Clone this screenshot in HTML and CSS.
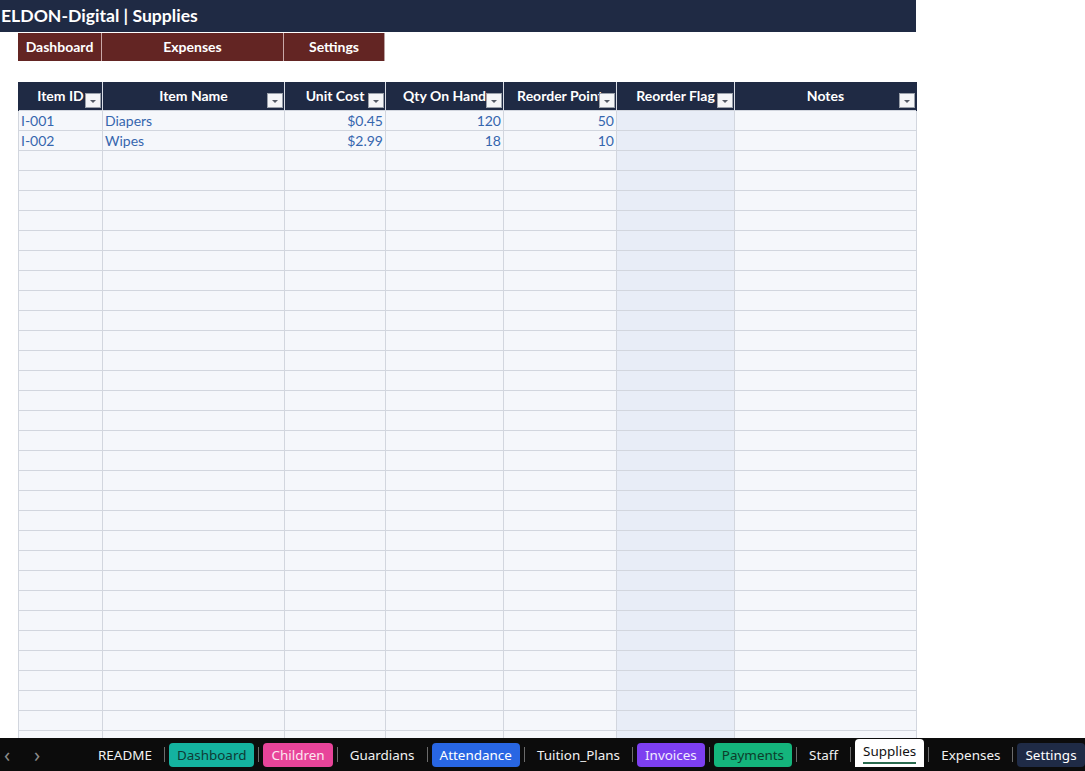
FILE: index.html
```html
<!DOCTYPE html>
<html>
<head>
<meta charset="utf-8">
<link rel="stylesheet" href="styles.css">
</head>
<body>
<div class="app">
  <div class="sheet">
    <div class="titlebar">ELDON-Digital | Supplies</div>
    <div class="navrow">
      <div class="navbtn w1">Dashboard</div>
      <div class="navbtn w2">Expenses</div>
      <div class="navbtn w3">Settings</div>
    </div>
    <table class="grid">
      <colgroup>
        <col class="c1"><col class="c2"><col class="c3"><col class="c4"><col class="c5"><col class="c6"><col class="c7">
      </colgroup>
      <thead>
        <tr>
          <th><span class="hl">Item ID</span><span class="fb"></span></th>
          <th><span class="hl">Item Name</span><span class="fb"></span></th>
          <th><span class="hl">Unit Cost</span><span class="fb"></span></th>
          <th><span class="hl">Qty On Hand</span><span class="fb"></span></th>
          <th><span class="hl">Reorder Point</span><span class="fb"></span></th>
          <th><span class="hl">Reorder Flag</span><span class="fb"></span></th>
          <th><span class="hl">Notes</span><span class="fb"></span></th>
        </tr>
      </thead>
      <tbody>
        <tr><td>I-001</td><td>Diapers</td><td class="r">$0.45</td><td class="r">120</td><td class="r">50</td><td class="flag"></td><td></td></tr>
        <tr><td>I-002</td><td>Wipes</td><td class="r">$2.99</td><td class="r">18</td><td class="r">10</td><td class="flag"></td><td></td></tr>
        <tr><td></td><td></td><td></td><td></td><td></td><td class="flag"></td><td></td></tr>
        <tr><td></td><td></td><td></td><td></td><td></td><td class="flag"></td><td></td></tr>
        <tr><td></td><td></td><td></td><td></td><td></td><td class="flag"></td><td></td></tr>
        <tr><td></td><td></td><td></td><td></td><td></td><td class="flag"></td><td></td></tr>
        <tr><td></td><td></td><td></td><td></td><td></td><td class="flag"></td><td></td></tr>
        <tr><td></td><td></td><td></td><td></td><td></td><td class="flag"></td><td></td></tr>
        <tr><td></td><td></td><td></td><td></td><td></td><td class="flag"></td><td></td></tr>
        <tr><td></td><td></td><td></td><td></td><td></td><td class="flag"></td><td></td></tr>
        <tr><td></td><td></td><td></td><td></td><td></td><td class="flag"></td><td></td></tr>
        <tr><td></td><td></td><td></td><td></td><td></td><td class="flag"></td><td></td></tr>
        <tr><td></td><td></td><td></td><td></td><td></td><td class="flag"></td><td></td></tr>
        <tr><td></td><td></td><td></td><td></td><td></td><td class="flag"></td><td></td></tr>
        <tr><td></td><td></td><td></td><td></td><td></td><td class="flag"></td><td></td></tr>
        <tr><td></td><td></td><td></td><td></td><td></td><td class="flag"></td><td></td></tr>
        <tr><td></td><td></td><td></td><td></td><td></td><td class="flag"></td><td></td></tr>
        <tr><td></td><td></td><td></td><td></td><td></td><td class="flag"></td><td></td></tr>
        <tr><td></td><td></td><td></td><td></td><td></td><td class="flag"></td><td></td></tr>
        <tr><td></td><td></td><td></td><td></td><td></td><td class="flag"></td><td></td></tr>
        <tr><td></td><td></td><td></td><td></td><td></td><td class="flag"></td><td></td></tr>
        <tr><td></td><td></td><td></td><td></td><td></td><td class="flag"></td><td></td></tr>
        <tr><td></td><td></td><td></td><td></td><td></td><td class="flag"></td><td></td></tr>
        <tr><td></td><td></td><td></td><td></td><td></td><td class="flag"></td><td></td></tr>
        <tr><td></td><td></td><td></td><td></td><td></td><td class="flag"></td><td></td></tr>
        <tr><td></td><td></td><td></td><td></td><td></td><td class="flag"></td><td></td></tr>
        <tr><td></td><td></td><td></td><td></td><td></td><td class="flag"></td><td></td></tr>
        <tr><td></td><td></td><td></td><td></td><td></td><td class="flag"></td><td></td></tr>
        <tr><td></td><td></td><td></td><td></td><td></td><td class="flag"></td><td></td></tr>
        <tr><td></td><td></td><td></td><td></td><td></td><td class="flag"></td><td></td></tr>
        <tr><td></td><td></td><td></td><td></td><td></td><td class="flag"></td><td></td></tr>
        <tr><td></td><td></td><td></td><td></td><td></td><td class="flag"></td><td></td></tr>
        <tr><td></td><td></td><td></td><td></td><td></td><td class="flag"></td><td></td></tr>
      </tbody>
    </table>
  </div>
  <div class="tabbar">
    <div class="arrows"><span class="arr">&#8249;</span><span class="arr">&#8250;</span></div>
    <div class="tabs">
      <div class="tab">README</div><i class="sep"></i>
      <div class="tab pill teal">Dashboard</div><i class="sep"></i>
      <div class="tab pill pink">Children</div><i class="sep"></i>
      <div class="tab">Guardians</div><i class="sep"></i>
      <div class="tab pill blue">Attendance</div><i class="sep"></i>
      <div class="tab">Tuition_Plans</div><i class="sep"></i>
      <div class="tab pill purple">Invoices</div><i class="sep"></i>
      <div class="tab pill green">Payments</div><i class="sep"></i>
      <div class="tab">Staff</div><i class="sep"></i>
      <div class="tab active"><span class="ul">Supplies</span></div><i class="sep"></i>
      <div class="tab">Expenses</div><i class="sep"></i>
      <div class="tab pill navy">Settings</div>
    </div>
  </div>
</div>
</body>
</html>
```

FILE: styles.css
```css
* { box-sizing: border-box; }
html, body { margin: 0; padding: 0; background: #ffffff; }
body { font-family: Lato, "Liberation Sans", sans-serif; }

.app {
  width: 1085px;
  height: 771px;
  display: flex;
  flex-direction: column;
  overflow: hidden;
}

.sheet {
  flex: 1;
  overflow: hidden;
  min-height: 0;
}

.titlebar {
  width: 916px;
  height: 32px;
  background: #1f2a44;
  color: #ffffff;
  font-weight: 700;
  font-size: 17.6px;
  line-height: 32px;
  padding-left: 1px;
}

.navrow {
  display: flex;
  margin: 1px 0 0 18px;
  height: 28px;
}
.navbtn {
  background: #632523;
  color: #ffffff;
  font-weight: 700;
  font-size: 14px;
  line-height: 28px;
  text-align: center;
  border-right: 1px solid #c9a9a8;
}
.navbtn:last-child { border-right: 1px solid #b9a0a0; }
.w1 { width: 84px; }
.w2 { width: 182px; }
.w3 { width: 101px; }

.grid {
  margin: 21px 0 0 18px;
  border-collapse: collapse;
  table-layout: fixed;
  width: 898px;
  font-size: 14px;
}
.c1 { width: 84px; }
.c2 { width: 182px; }
.c3 { width: 101px; }
.c4 { width: 118px; }
.c5 { width: 113px; }
.c6 { width: 118px; }
.c7 { width: 182px; }

.grid th {
  position: relative;
  height: 28px;
  padding: 0;
  background: #1f2a44;
  color: #ffffff;
  font-weight: 700;
  font-size: 14px;
  text-align: center;
  white-space: nowrap;
  overflow: hidden;
  border-left: 1px solid #d9dde6;
  border-right: 1px solid #d9dde6;
  line-height: 26px;
}
.grid th:first-child { border-left: 1px solid #1f2a44; }
.grid th:last-child { border-right: 1px solid #1f2a44; }
.hl { display: inline-block; }

.fb {
  position: absolute;
  right: 1px;
  bottom: 2px;
  width: 16px;
  height: 15px;
  background: #f4f5f7;
  border: 1px solid #9aa0aa;
}
.fb::after {
  content: "";
  position: absolute;
  left: 4px;
  top: 6px;
  border-left: 3px solid transparent;
  border-right: 3px solid transparent;
  border-top: 3px solid #555b66;
}

.grid td {
  height: 20px;
  padding: 1px 2px 0;
  background: #f5f7fb;
  border: 1px solid #d2d6de;
  color: #3566ae;
  white-space: nowrap;
  overflow: hidden;
  line-height: 18px;
}
.grid td.r { text-align: right; }
.grid td.flag { background: #e8edf7; }

.tabbar {
  height: 33px;
  flex: none;
  background: #0c0c0c;
  display: flex;
  align-items: center;
  font-family: "Noto Sans", "Open Sans", sans-serif;
  font-size: 13.45px;
  color: #ffffff;
  position: relative;
}
.arrows {
  width: 90px;
  display: flex;
  align-items: center;
  padding-left: 2px;
  gap: 20px;
  color: #8a8a8a;
  font-size: 20px;
}
.arr { width: 10px; display: inline-block; text-align: center; }
.tabs {
  display: flex;
  align-items: center;
  height: 100%;
}
.tab {
  padding: 0 8px;
  height: 24px;
  line-height: 24px;
  white-space: nowrap;
  color: #f2f2f2;
}
.sep {
  display: block;
  width: 1px;
  height: 15px;
  background: #6b6b6b;
  margin: 0 4px;
}
.pill { border-radius: 4px; }
.teal { background: #14b3a0; color: #0f3b36; }
.pink { background: #e8449a; color: #fde7f1; }
.blue { background: #2866e3; color: #ffffff; }
.purple { background: #7d3ff0; color: #f1eaff; }
.green { background: #14b57c; color: #0d3d2b; }
.navy { background: #1f2b46; color: #ffffff; }
.active {
  background: #ffffff;
  color: #111111;
  height: 28px;
  align-self: flex-start;
  margin-top: 1px;
  border-radius: 4px 4px 0 0;
  line-height: 24px;
  padding: 0 8px;
}
.ul {
  display: inline-block;
  border-bottom: 2px solid #2a6b4f;
  line-height: 22px;
}
```
